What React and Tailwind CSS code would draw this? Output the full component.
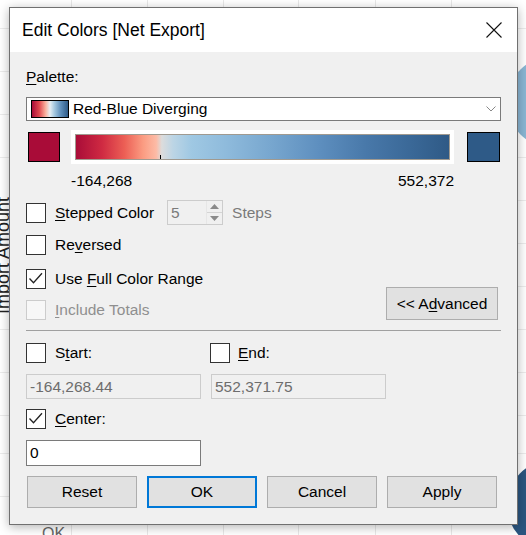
import React from 'react';

const gradientBar =
  'bg-[linear-gradient(to_right,#a90c38_0%,#cf2a42_7%,#ec5f55_13%,#fb9c82_18%,#fdbba6_21.5%,#dcdcdc_23%,#bcd5e5_26%,#9fc8e3_31%,#8fbbdc_40%,#78a7cf_52%,#5e8fbf_65%,#4878a9_78%,#3a6897_90%,#2f5a86_100%)]';
const gradientIcon =
  'bg-[linear-gradient(to_right,#a90c38_0%,#e0484e_20%,#f9b3a0_38%,#e6eef3_50%,#a6c9e0_62%,#5f8fbb_80%,#2e5a87_100%)]';

const vLines = ['left-[71px]', 'left-[147px]', 'left-[223px]', 'left-[298px]', 'left-[375px]', 'left-[451px]'];
const hLines = ['top-[28px]', 'top-[71px]', 'top-[114px]', 'top-[157px]', 'top-[200px]', 'top-[243px]', 'top-[286px]', 'top-[329px]', 'top-[372px]', 'top-[415px]', 'top-[453px]', 'top-[496px]'];

const CheckBox = ({ checked, disabled }) => (
  <span
    className={`w-[20px] h-[20px] border shrink-0 flex items-center justify-center ${
      disabled ? 'border-[#cccccc] bg-[#f7f7f7]' : 'border-[#333333] bg-white'
    }`}
  >
    {checked && (
      <svg width="18" height="18" viewBox="0 0 18 18">
        <path d="M2.5 8.5 L6.5 12.8 L15 3.2" fill="none" stroke="#222" strokeWidth="1.3" />
      </svg>
    )}
  </span>
);

const Button = ({ children, primary }) => (
  <div
    className={`w-[110px] h-[32px] flex items-center justify-center bg-[#e1e1e1] ${
      primary ? 'border-2 border-[#0078d7]' : 'border border-[#adadad]'
    }`}
  >
    {children}
  </div>
);

const App = () => {
  return (
    <div className="relative w-[526px] h-[535px] overflow-hidden bg-white font-['Liberation_Sans',Arial,sans-serif] text-[15.5px] text-black">
      {/* chart behind the dialog */}
      {vLines.map((c) => (
        <div key={c} className={`absolute top-0 bottom-0 w-px bg-[#e8e8e8] ${c}`} />
      ))}
      {hLines.map((c) => (
        <div key={c} className={`absolute left-0 right-0 h-px bg-[#ececec] ${c}`} />
      ))}
      <div className="absolute left-[507px] top-[56px] w-[92px] h-[92px] rounded-full bg-[#8ab6d4]" />
      <div className="absolute left-[507px] top-[460px] w-[90px] h-[90px] rounded-full bg-[#2b5680]" />
      <div className="absolute left-[-6px] top-[188px] h-[126px] w-[18px] [writing-mode:vertical-rl] rotate-180 text-[18px] leading-[18px] text-[#222]">
        Import Amount
      </div>
      <div className="absolute left-[42px] top-[524px] text-[16px] leading-[20px] text-[#666]">OK</div>

      {/* dialog */}
      <div className="absolute left-[9px] top-[7px] w-[509px] h-[518px] border border-[#707070] bg-[#f0f0f0] shadow-[0_2px_10px_rgba(0,0,0,0.3)] flex flex-col">
        <div className="h-[44px] bg-white flex items-center justify-between pl-[12px] pr-[15px]">
          <span className="text-[17.5px]">Edit Colors [Net Export]</span>
          <svg width="16" height="16" viewBox="0 0 16 16">
            <path d="M0.5 0.5 L15.5 15.5 M15.5 0.5 L0.5 15.5" stroke="#111" strokeWidth="1.1" />
          </svg>
        </div>

        <div className="flex flex-col px-[16px]">
          <div className="mt-[14px] h-[22px] leading-[22px]">
            <u className="underline-offset-[2px]">P</u>alette:
          </div>

          <div className="mt-[9px] h-[24px] border border-[#7a7a7a] bg-white flex items-center pl-[4px] pr-[4px]">
            <span className={`w-[38px] h-[18px] border border-black ${gradientIcon}`} />
            <span className="ml-[4px] flex-1">Red-Blue Diverging</span>
            <svg width="10" height="6" viewBox="0 0 10 6">
              <path d="M0.5 0.5 L5 5 L9.5 0.5" fill="none" stroke="#888" strokeWidth="1" />
            </svg>
          </div>

          <div className="mt-[9px] h-[34px] flex items-center">
            <span className="ml-[2px] w-[32px] h-[30px] border border-black bg-[#a90c38]" />
            <div className="ml-[11px] w-[383px] h-[34px] bg-white p-[4px]">
              <div className={`relative w-full h-full border border-[#a09a90] ${gradientBar}`}>
                <span className="absolute left-[84px] bottom-0 w-px h-[4px] bg-black" />
              </div>
            </div>
            <span className="ml-[13px] w-[33px] h-[30px] border border-black bg-[#2e5a87]" />
          </div>

          <div className="mt-[6px] h-[22px] leading-[22px] flex justify-between pl-[45px] pr-[47px]">
            <span>-164,268</span>
            <span>552,372</span>
          </div>

          <div className="mt-[8px] h-[25px] flex items-center">
            <CheckBox />
            <span className="ml-[9px]">
              <u className="underline-offset-[2px]">S</u>tepped Color
            </span>
            <div className="ml-[13px] w-[56px] h-[25px] border border-[#cccccc] flex">
              <span className="flex-1 pl-[3px] leading-[23px] text-[#7a7a7a]">5</span>
              <div className="w-[16px] flex flex-col border-l border-[#e6e6e6]">
                <span className="flex-1 flex items-center justify-center border-b border-[#d4d4d4]">
                  <svg width="9" height="5" viewBox="0 0 9 5"><path d="M0 5 L4.5 0 L9 5 Z" fill="#8a8a8a" /></svg>
                </span>
                <span className="flex-1 flex items-center justify-center">
                  <svg width="9" height="5" viewBox="0 0 9 5"><path d="M0 0 L4.5 5 L9 0 Z" fill="#8a8a8a" /></svg>
                </span>
              </div>
            </div>
            <span className="ml-[9px] text-[#7a7a7a]">Steps</span>
          </div>

          <div className="mt-[10px] h-[20px] flex items-center">
            <CheckBox />
            <span className="ml-[9px]">
              Re<u className="underline-offset-[2px]">v</u>ersed
            </span>
          </div>

          <div className="mt-[13px] h-[52px] flex items-end justify-between">
            <div className="flex flex-col">
              <div className="h-[20px] flex items-center">
                <CheckBox checked />
                <span className="ml-[9px]">
                  Use <u className="underline-offset-[2px]">F</u>ull Color Range
                </span>
              </div>
              <div className="mt-[11px] h-[20px] flex items-center text-[#8f8f8f]">
                <CheckBox disabled />
                <span className="ml-[9px]">
                  <u className="underline-offset-[2px]">I</u>nclude Totals
                </span>
              </div>
            </div>
            <div className="mr-[3px] w-[112px] h-[33px] border border-[#adadad] bg-[#e1e1e1] flex items-center justify-center">
              &lt;&lt; A<u className="underline-offset-[2px]">d</u>vanced
            </div>
          </div>

          <div className="mt-[10px] h-px bg-[#a0a0a0]" />

          <div className="mt-[12px] h-[20px] flex items-center">
            <div className="w-[184px] flex items-center">
              <CheckBox />
              <span className="ml-[9px]">
                S<u className="underline-offset-[2px]">t</u>art:
              </span>
            </div>
            <div className="flex items-center">
              <CheckBox />
              <span className="ml-[8px]">
                <u className="underline-offset-[2px]">E</u>nd:
              </span>
            </div>
          </div>

          <div className="mt-[11px] h-[25px] flex gap-[10px]">
            <div className="w-[175px] border border-[#cccccc] pl-[3px] leading-[23px] text-[#6d6d6d]">-164,268.44</div>
            <div className="w-[175px] border border-[#cccccc] pl-[3px] leading-[23px] text-[#6d6d6d]">552,371.75</div>
          </div>

          <div className="mt-[10px] h-[20px] flex items-center">
            <CheckBox checked />
            <span className="ml-[9px]">
              <u className="underline-offset-[2px]">C</u>enter:
            </span>
          </div>

          <div className="mt-[11px] w-[175px] h-[26px] border border-[#7a7a7a] bg-white pl-[3px] leading-[24px]">0</div>

          <div className="mt-[10px] ml-[1px] flex gap-[10px]">
            <Button>Reset</Button>
            <Button primary>OK</Button>
            <Button>Cancel</Button>
            <Button>Apply</Button>
          </div>
        </div>
      </div>
    </div>
  );
};

export default App;
